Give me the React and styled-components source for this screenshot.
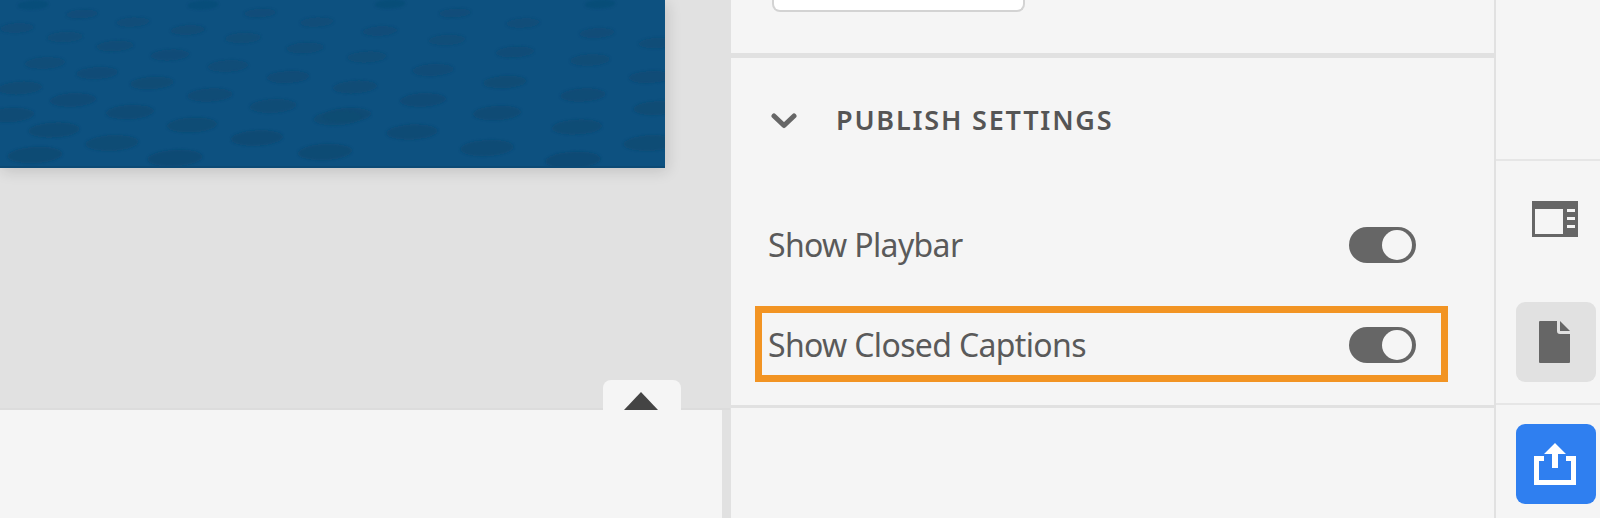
import React from "react";
import styled, { createGlobalStyle } from "styled-components";

const GlobalStyle = createGlobalStyle`
  html, body {
    margin: 0;
    padding: 0;
    background: #f5f5f5;
  }
`;

const Page = styled.div`
  width: 1600px;
  height: 518px;
  display: flex;
  overflow: hidden;
  font-family: "Noto Sans", "Open Sans", sans-serif;
  color: #555;
  background: #f5f5f5;
`;

const Workspace = styled.div`
  width: 730px;
  flex: none;
  display: flex;
  flex-direction: column;
  position: relative;
`;

const Canvas = styled.div`
  height: 410px;
  flex: none;
  background: #e1e1e1;
  border-bottom: 2px solid #dcdcdc;
  box-sizing: border-box;
`;

const Artboard = styled.div`
  width: 665px;
  height: 168px;
  background: #0d5180;
  box-shadow: 2px 3px 14px rgba(0, 0, 0, 0.14);
  overflow: hidden;

  svg {
    display: block;
  }
`;

const Timeline = styled.div`
  flex: 1;
  width: 722px;
  background: #f5f5f5;
  border-right: 8px solid #e1e1e1;
`;

const CollapseTab = styled.div`
  position: absolute;
  left: 603px;
  top: 380px;
  width: 78px;
  height: 30px;
  box-sizing: border-box;
  padding-right: 2px;
  display: flex;
  align-items: flex-end;
  justify-content: center;
  background: #f5f5f5;
  border-radius: 8px 8px 0 0;
`;

const Triangle = styled.div`
  width: 0;
  height: 0;
  border-left: 17px solid transparent;
  border-right: 17px solid transparent;
  border-bottom: 18px solid #444;
`;

const Inspector = styled.div`
  width: 766px;
  flex: none;
  box-sizing: border-box;
  border-left: 1px solid #e1e1e1;
  border-right: 2px solid #e1e1e1;
  display: flex;
  flex-direction: column;
`;

const TopSection = styled.div`
  height: 53px;
  flex: none;
  padding-left: 41px;
`;

const FieldStub = styled.div`
  width: 253px;
  height: 12px;
  box-sizing: border-box;
  background: #fff;
  border: 2px solid #d3d3d3;
  border-top: 0;
  border-radius: 0 0 8px 8px;
`;

const Section = styled.section`
  border-top: 5px solid #e1e1e1;
  border-bottom: 3px solid #e1e1e1;
  padding-bottom: 10px;
`;

const SectionHeader = styled.div`
  height: 137px;
  box-sizing: border-box;
  padding: 37px 0 0 40px;
  display: flex;
  align-items: flex-start;
  gap: 39px;

  svg {
    margin-top: 18px;
    flex: none;
  }
`;

const SectionTitle = styled.h2`
  margin: 0;
  font-size: 27px;
  line-height: 50px;
  font-weight: 600;
  letter-spacing: 1.8px;
  color: #555;
`;

const Row = styled.div`
  position: relative;
  height: 100px;
  display: flex;
  align-items: center;
  justify-content: space-between;
  padding: 0 78px 0 37px;

  ${(p) =>
    p.$highlight &&
    `
    &::after {
      content: "";
      position: absolute;
      left: 24px;
      right: 46px;
      top: 11px;
      bottom: 13px;
      border: 7px solid #f29423;
    }
  `}
`;

const RowLabel = styled.span`
  font-size: 32px;
  letter-spacing: -0.65px;
  padding-bottom: 2px;
  color: #5a5a5a;
`;

const Toggle = styled.div`
  width: 67px;
  height: 36px;
  box-sizing: border-box;
  border-radius: 18px;
  background: #666;
  padding: 3px 4px 3px 3px;
  display: flex;
  justify-content: flex-end;
`;

const Knob = styled.div`
  width: 30px;
  height: 30px;
  border-radius: 50%;
  background: #f5f5f5;
`;

const Rail = styled.div`
  flex: 1;
  display: flex;
  flex-direction: column;
`;

const RailTop = styled.div`
  height: 159px;
  flex: none;
  border-bottom: 2px solid #e6e6e6;
`;

const RailTools = styled.div`
  padding: 18px 0 21px 20px;
  display: flex;
  flex-direction: column;
  gap: 43px;
  border-bottom: 2px solid #e6e6e6;
`;

const RailAction = styled.div`
  padding: 19px 0 0 20px;
`;

const IconButton = styled.div`
  width: 80px;
  height: 80px;
  border-radius: 9px;
  display: flex;
  align-items: center;
  justify-content: center;
  background: ${(p) => (p.$primary ? "#2f7ff0" : p.$active ? "#e1e1e1" : "transparent")};

  svg {
    margin: 0 3px 1px 0;
  }
`;

// dark blotches of the artboard's picture
const blotches = [
  [112, 143], [325, 152], [257, 138], [192, 125], [130, 112], [73, 100], [20, 88],
  [54, 130], [10, 115], [338, 118], [273, 106], [210, 95], [152, 83], [97, 73], [45, 63],
  [355, 87], [288, 77], [228, 66], [170, 55], [115, 46], [65, 37], [17, 28],
  [367, 57], [305, 48], [243, 38], [188, 30], [133, 22], [82, 14], [33, 5],
  [380, 31], [317, 22], [260, 13], [203, 5], [497, 113], [577, 127], [487, 148],
  [412, 132], [423, 100], [505, 82], [583, 95], [657, 108], [650, 143], [590, 60],
  [515, 52], [433, 70], [447, 40], [523, 23], [597, 33], [455, 13], [600, 4], [390, 4],
  [650, 77], [347, 115], [657, 43], [573, 160], [175, 158], [35, 155],
];

const ArtboardPattern = () => (
  <svg width="665" height="168" viewBox="0 0 665 168">
    <defs>
      <filter id="soft">
        <feGaussianBlur stdDeviation="1.2" />
      </filter>
    </defs>
    <g filter="url(#soft)">
      {blotches.map(([x, y]) => {
        const rx = 15 + y * 0.08;
        return (
          <ellipse
            key={`${x}-${y}`}
            cx={x}
            cy={y}
            rx={rx}
            ry={rx * 0.3}
            fill="#0e4a72"
            opacity={0.45 + (y / 168) * 0.45}
            transform={`rotate(-3 ${x} ${y})`}
          />
        );
      })}
    </g>
    <rect x="0" y="166" width="665" height="2" fill="#0c4a75" />
  </svg>
);

const Chevron = () => (
  <svg width="26" height="16" viewBox="0 0 26 16">
    <path d="M3 3 L13 12.5 L23 3" fill="none" stroke="#666" strokeWidth="5" strokeLinecap="round" strokeLinejoin="round" />
  </svg>
);

const PanelIcon = () => (
  <svg width="46" height="36" viewBox="0 0 46 36">
    <path fill="#666" d="M0 0h46v36H0z" />
    <path fill="#f5f5f5" d="M3 8h28v25H3z" />
    <path fill="#f5f5f5" d="M35 8h8v3h-8zM35 16h8v3h-8zM35 24h8v3h-8z" />
  </svg>
);

const PageIcon = () => (
  <svg width="31" height="42" viewBox="0 0 31 42">
    <path fill="#666" d="M1 0h17v10a3 3 0 0 0 3 3h10v28a1 1 0 0 1-1 1H1a1 1 0 0 1-1-1V1a1 1 0 0 1 1-1z" />
    <path fill="#666" d="M21 0l10 10h-10z" />
  </svg>
);

const ShareIcon = () => (
  <svg width="42" height="42" viewBox="0 0 42 42">
    <path fill="#fff" d="M21 0l11 11h-8v14h-6V11h-8z" />
    <path fill="#fff" d="M0 13h10v5H5v19h32V18h-5v-5h10v29H0z" />
  </svg>
);

const SettingRow = ({ label, highlight }) => (
  <Row $highlight={highlight}>
    <RowLabel>{label}</RowLabel>
    <Toggle>
      <Knob />
    </Toggle>
  </Row>
);

export default function App() {
  return (
    <Page>
      <GlobalStyle />
      <Workspace>
        <Canvas>
          <Artboard>
            <ArtboardPattern />
          </Artboard>
        </Canvas>
        <Timeline />
        <CollapseTab>
          <Triangle />
        </CollapseTab>
      </Workspace>
      <Inspector>
        <TopSection>
          <FieldStub />
        </TopSection>
        <Section>
          <SectionHeader>
            <Chevron />
            <SectionTitle>PUBLISH SETTINGS</SectionTitle>
          </SectionHeader>
          <SettingRow label="Show Playbar" />
          <SettingRow label="Show Closed Captions" highlight />
        </Section>
      </Inspector>
      <Rail>
        <RailTop />
        <RailTools>
          <IconButton>
            <PanelIcon />
          </IconButton>
          <IconButton $active>
            <PageIcon />
          </IconButton>
        </RailTools>
        <RailAction>
          <IconButton $primary>
            <ShareIcon />
          </IconButton>
        </RailAction>
      </Rail>
    </Page>
  );
}
